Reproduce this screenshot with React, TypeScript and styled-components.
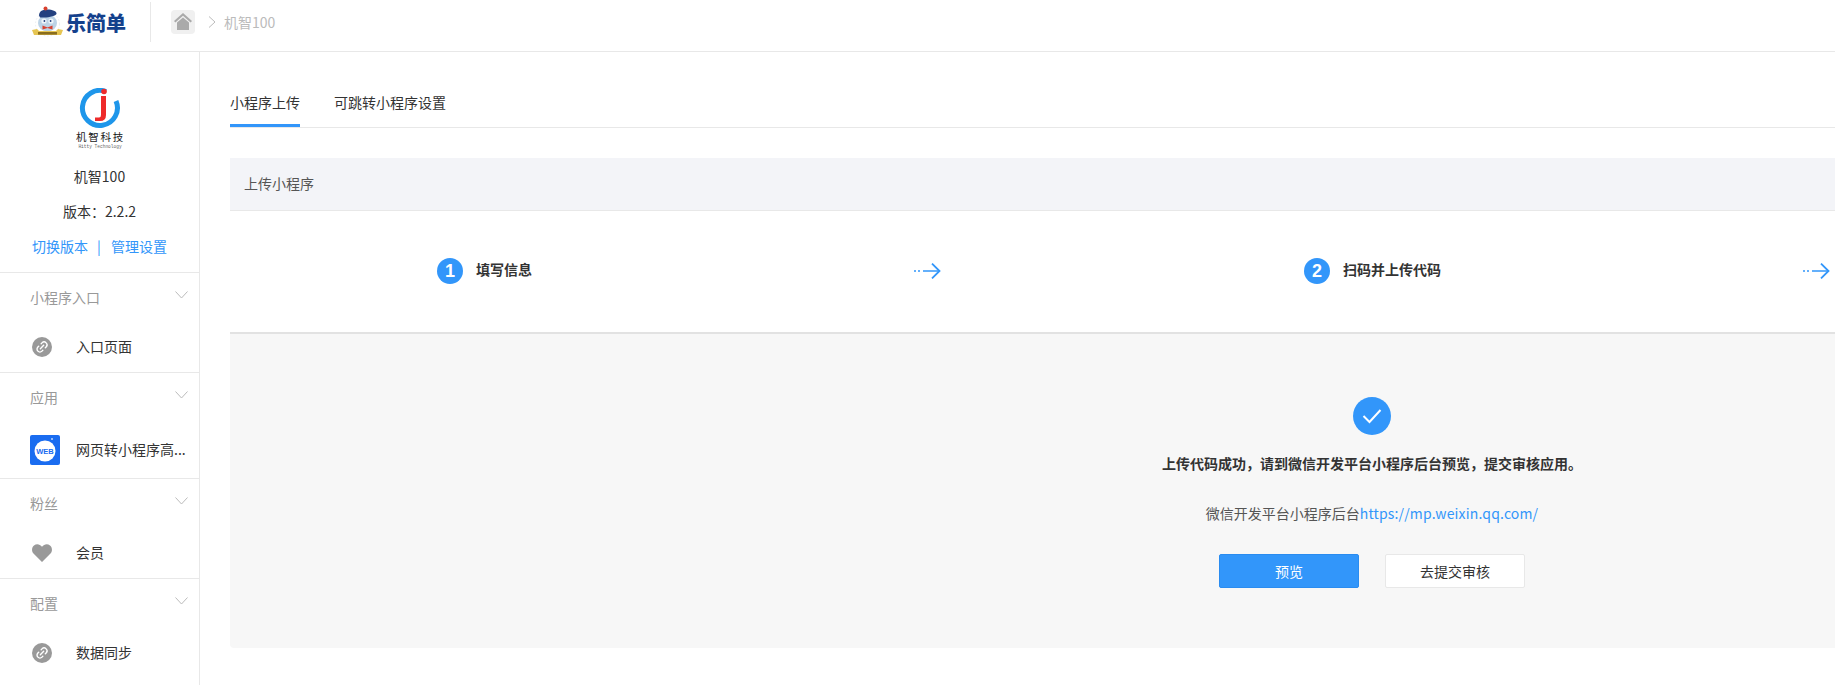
import styled, { createGlobalStyle } from 'styled-components';
import { Link2 } from 'lucide-react';

const GlobalStyle = createGlobalStyle`
  html, body {
    margin: 0;
    height: 100%;
    overflow: hidden;
    background: #fff;
  }
  * {
    box-sizing: border-box;
  }
  body {
    font-family: "Noto Sans CJK SC", "Liberation Sans", sans-serif;
    font-size: 14px;
    color: #333;
  }
`;

const Page = styled.div`
  width: 100vw;
  height: 100vh;
  display: flex;
  flex-direction: column;
  overflow: hidden;
`;

const TopBar = styled.header`
  flex: none;
  height: 52px;
  padding: 0 0 8px 32px;
  display: flex;
  align-items: center;
  border-bottom: 1px solid #e8e8e8;
`;

const Brand = styled.div`
  width: 118px;
  display: flex;
  align-items: center;
  column-gap: 3px;
`;

const BrandName = styled.span`
  font-size: 20px;
  line-height: 24px;
  font-weight: 900;
  color: #14418c;
  margin-top: 3px;
`;

const BarDivider = styled.div`
  width: 1px;
  height: 40px;
  background: #e8e8e8;
`;

const HomeTile = styled.div`
  width: 24px;
  height: 24px;
  margin-left: 20px;
  border-radius: 4px;
  background: #f0f0f0;
  display: flex;
  align-items: center;
  justify-content: center;
`;

const Crumb = styled.span`
  margin-left: 8px;
  color: #bbb;
  line-height: 20px;
`;

const Body = styled.div`
  flex: 1;
  min-height: 0;
  display: flex;
`;

const Sidebar = styled.aside`
  flex: none;
  width: 200px;
  border-right: 1px solid #e8e8e8;
`;

const Profile = styled.div`
  height: 221px;
  padding-top: 36px;
  display: flex;
  flex-direction: column;
  align-items: center;
  border-bottom: 1px solid #e8e8e8;
`;

const ProfileLine = styled.div`
  height: 35px;
  line-height: 35px;
  white-space: nowrap;
`;

const ProfileName = styled(ProfileLine)`
  margin-top: 7px;
`;

const BlueLink = styled.a`
  color: #3296fa;
  text-decoration: none;
`;

const LinkSep = styled.span`
  margin: 0 10px 0 9px;
  color: #3296fa;
`;

const Section = styled.section`
  border-bottom: 1px solid #e8e8e8;

  &:last-child {
    border-bottom: 0;
  }
`;

const SectionHead = styled.div`
  height: 51px;
  padding: 0 11px 3px 30px;
  display: flex;
  align-items: center;
  justify-content: space-between;
  color: #999;
  svg {
    margin-top: -4px;
  }
`;

const NavItem = styled.div<{ $tall?: boolean }>`
  padding: ${({ $tall }) => ($tall ? '11px 0 13px 30px' : '13px 0 15px 32px')};
  display: flex;
  align-items: center;
  column-gap: ${({ $tall }) => ($tall ? '16px' : '24px')};
  white-space: nowrap;
`;

const LinkBadge = styled.span`
  width: 20px;
  height: 20px;
  border-radius: 50%;
  background: #999;
  color: #fff;
  display: flex;
  align-items: center;
  justify-content: center;
  svg {
    transform: rotate(-45deg);
  }
`;

const NavLabel = styled.span`
  line-height: 16px;
  margin-bottom: 3px;
`;

const Main = styled.main`
  flex: 1;
  min-width: 0;
  padding: 25px 0 0 30px;
  overflow: hidden;
`;

const Tabs = styled.nav`
  height: 51px;
  display: flex;
  column-gap: 34px;
  border-bottom: 1px solid #e8e8e8;
`;

const Tab = styled.div<{ $active?: boolean }>`
  height: 50px;
  line-height: 50px;
  border-bottom: 3px solid ${({ $active }) => ($active ? '#3296fa' : 'transparent')};
`;

const Panel = styled.div`
  width: 2284px;
  margin-top: 30px;
`;

const PanelHead = styled.div`
  height: 53px;
  padding-left: 14px;
  line-height: 50px;
  background: #f3f4f8;
  border-bottom: 1px solid #e8e8e8;
  color: #555;
`;

const Steps = styled.div`
  height: 121px;
  display: flex;
`;

const Step = styled.div<{ $width: number; $pad: number }>`
  flex: none;
  width: ${({ $width }) => $width}px;
  padding-left: ${({ $pad }) => $pad}px;
  padding-bottom: 2px;
  display: flex;
  align-items: center;
  justify-content: space-between;
`;

const StepTitle = styled.div`
  display: flex;
  align-items: center;
  column-gap: 13px;
  font-weight: 700;
  line-height: 20px;
`;

const StepText = styled.span`
  margin-bottom: 3px;
`;

const StepNumber = styled.span`
  width: 26px;
  height: 26px;
  border-radius: 50%;
  background: #3296fa;
  color: #fff;
  font-family: "Liberation Sans", sans-serif;
  font-size: 18px;
  font-weight: 700;
  line-height: 26px;
  text-align: center;
`;

const Result = styled.div`
  height: 316px;
  padding-top: 63px;
  display: flex;
  flex-direction: column;
  align-items: center;
  background: #f7f7f7;
  border-top: 2px solid #e2e2e2;
  border-radius: 0 0 4px 4px;
`;

const SuccessMark = styled.div`
  width: 38px;
  height: 38px;
  border-radius: 50%;
  background: #3296fa;
  display: flex;
  align-items: center;
  justify-content: center;
`;

const ResultTitle = styled.div`
  margin-top: 18px;
  line-height: 20px;
  font-weight: 700;
`;

const ResultHint = styled.div`
  margin-top: 30px;
  line-height: 20px;
  color: #555;
`;

const HintLink = styled(BlueLink)`
  letter-spacing: 0.16px;
`;

const Actions = styled.div`
  margin-top: 31px;
  display: flex;
  column-gap: 26px;
`;

const Button = styled.button<{ $primary?: boolean }>`
  width: 140px;
  height: 34px;
  padding: 0;
  border-radius: 2px;
  border: 1px solid ${({ $primary }) => ($primary ? '#2a8cf0' : '#e8e8e8')};
  background: ${({ $primary }) => ($primary ? '#3296fa' : '#fff')};
  color: ${({ $primary }) => ($primary ? '#fff' : '#333')};
  font: inherit;
`;

function Mascot() {
  return (
    <svg width="31" height="31" viewBox="0 0 31 31">
      <circle cx="15.5" cy="18" r="12" fill="none" stroke="#e3e7ee" strokeWidth="0.8" strokeDasharray="1.5 2" />
      <ellipse cx="15.5" cy="17" rx="9.5" ry="8.5" fill="#bcd3e6" />
      <circle cx="12" cy="15" r="2.6" fill="#eef5fa" />
      <circle cx="19" cy="15" r="2.6" fill="#eef5fa" />
      <circle cx="12.4" cy="15" r="0.9" fill="#23407f" />
      <circle cx="18.6" cy="15" r="0.9" fill="#23407f" />
      <path d="M7 9.5 C7 5 11 3.5 15.5 3.5 C20 3.5 25 5 24.5 8 C22 11 12 12 8 11.5 Z" fill="#23407f" />
      <circle cx="13.5" cy="2.5" r="2" fill="#d8412f" />
      <path d="M10.5 19.5 L15.5 21.5 L20.5 19.5 V23.5 L15.5 22 L10.5 23.5 Z" fill="#d8412f" />
      <path d="M0 24 L5 23 L7 25 H24 L26 23 L31 24 L29 29 H2 Z" fill="#e6c552" />
      <rect x="6" y="26" width="19" height="2.6" fill="#8a6d1e" />
    </svg>
  );
}

function HomeIcon() {
  return (
    <svg width="18" height="17" viewBox="0 0 18 17">
      <path d="M9 0 L18 8 L16.6 9.4 L9 2.8 L1.4 9.4 L0 8 Z" fill="#aaa" />
      <path d="M3 9.6 L9 4.4 L15 9.6 V17 H3 Z" fill="#aaa" />
    </svg>
  );
}

function CrumbChevron() {
  return (
    <svg width="8" height="12" viewBox="0 0 8 12" style={{ marginLeft: 13 }}>
      <path d="M1 0.5 L7 6 L1 11.5" fill="none" stroke="#bbb" strokeWidth="1" />
    </svg>
  );
}

function AppLogo() {
  return (
    <svg width="60" height="64" viewBox="0 0 60 64">
      <path d="M36 3.5 A17.5 17.5 0 1 0 46 13" fill="none" stroke="#1e96ea" strokeWidth="5" />
      <circle cx="34" cy="3.5" r="2.8" fill="#ee2a2a" />
      <path d="M31 8 H36 V27 Q36 33 30 33 H25 V29.5 H29 Q31 29.5 31 27 Z" fill="#ee2a2a" />
      <text x="30.5" y="53" textAnchor="middle" fontSize="10.5" fontWeight="400" letterSpacing="1.8" fill="#222">机智科技</text>
      <text x="30" y="60" textAnchor="middle" fontSize="4.5" fontFamily="Liberation Mono" fill="#666">Hitty Technology</text>
    </svg>
  );
}

function Chevron() {
  return (
    <svg width="13" height="8" viewBox="0 0 13 8">
      <path d="M0.5 0.5 L6.5 7 L12.5 0.5" fill="none" stroke="#bbb" strokeWidth="1" />
    </svg>
  );
}

function WebIcon() {
  return (
    <svg width="30" height="30" viewBox="0 0 30 30">
      <rect width="30" height="30" rx="2" fill="#1a6cf0" />
      <circle cx="15" cy="16" r="10.5" fill="#fff" />
      <text x="15" y="18.5" textAnchor="middle" fontSize="7.5" fontWeight="900" fontFamily="Liberation Sans" fill="#1a6cf0">WEB</text>
      <circle cx="22" cy="4" r="1" fill="#bcd4fa" />
    </svg>
  );
}

function HeartIcon() {
  return (
    <svg width="20" height="18" viewBox="0 0 20 18" style={{ margin: '1px 0' }}>
      <path d="M10 18 L1.5 9.6 C-0.8 7 -0.2 3 2 1.4 C4.6 -0.6 8 0.1 10 2.8 C12 0.1 15.4 -0.6 18 1.4 C20.2 3 20.8 7 18.5 9.6 Z" fill="#999" />
    </svg>
  );
}

function StepArrow() {
  return (
    <svg width="27" height="16" viewBox="0 0 27 16">
      <path d="M0 8 H2 M4 8 H6 M9 8 H25" fill="none" stroke="#3296fa" strokeWidth="1.6" />
      <path d="M18 0.6 L25.5 8 L18 15.4" fill="none" stroke="#3296fa" strokeWidth="1.8" />
    </svg>
  );
}

export default function App() {
  return (
    <Page>
      <GlobalStyle />
      <TopBar>
        <Brand>
          <Mascot />
          <BrandName>乐简单</BrandName>
        </Brand>
        <BarDivider />
        <HomeTile>
          <HomeIcon />
        </HomeTile>
        <CrumbChevron />
        <Crumb>机智100</Crumb>
      </TopBar>
      <Body>
        <Sidebar>
          <Profile>
            <AppLogo />
            <ProfileName>机智100</ProfileName>
            <ProfileLine>版本：2.2.2</ProfileLine>
            <ProfileLine>
              <BlueLink>切换版本</BlueLink>
              <LinkSep>|</LinkSep>
              <BlueLink>管理设置</BlueLink>
            </ProfileLine>
          </Profile>
          <Section>
            <SectionHead>
              小程序入口
              <Chevron />
            </SectionHead>
            <NavItem>
              <LinkBadge>
                <Link2 size={14} strokeWidth={2.4} />
              </LinkBadge>
              <NavLabel>入口页面</NavLabel>
            </NavItem>
          </Section>
          <Section>
            <SectionHead>
              应用
              <Chevron />
            </SectionHead>
            <NavItem $tall>
              <WebIcon />
              <NavLabel>网页转小程序高...</NavLabel>
            </NavItem>
          </Section>
          <Section>
            <SectionHead>
              粉丝
              <Chevron />
            </SectionHead>
            <NavItem>
              <HeartIcon />
              <NavLabel>会员</NavLabel>
            </NavItem>
          </Section>
          <Section>
            <SectionHead>
              配置
              <Chevron />
            </SectionHead>
            <NavItem>
              <LinkBadge>
                <Link2 size={14} strokeWidth={2.4} />
              </LinkBadge>
              <NavLabel>数据同步</NavLabel>
            </NavItem>
          </Section>
        </Sidebar>
        <Main>
          <Tabs>
            <Tab $active>小程序上传</Tab>
            <Tab>可跳转小程序设置</Tab>
          </Tabs>
          <Panel>
            <PanelHead>上传小程序</PanelHead>
            <Steps>
              <Step $width={711} $pad={207}>
                <StepTitle>
                  <StepNumber>1</StepNumber>
                  <StepText>填写信息</StepText>
                </StepTitle>
                <StepArrow />
              </Step>
              <Step $width={889} $pad={363}>
                <StepTitle>
                  <StepNumber>2</StepNumber>
                  <StepText>扫码并上传代码</StepText>
                </StepTitle>
                <StepArrow />
              </Step>
            </Steps>
            <Result>
              <SuccessMark>
                <svg width="20" height="16" viewBox="0 0 20 16">
                  <path d="M1.5 8 L7.5 14 L18.5 2" fill="none" stroke="#fff" strokeWidth="2" />
                </svg>
              </SuccessMark>
              <ResultTitle>上传代码成功，请到微信开发平台小程序后台预览，提交审核应用。</ResultTitle>
              <ResultHint>
                微信开发平台小程序后台<HintLink>https://mp.weixin.qq.com/</HintLink>
              </ResultHint>
              <Actions>
                <Button $primary>预览</Button>
                <Button>去提交审核</Button>
              </Actions>
            </Result>
          </Panel>
        </Main>
      </Body>
    </Page>
  );
}
